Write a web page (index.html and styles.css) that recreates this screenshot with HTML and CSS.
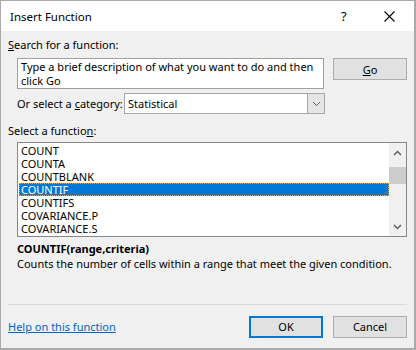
FILE: index.html
```html
<!DOCTYPE html>
<html>
<head>
<meta charset="utf-8">
<link rel="stylesheet" href="styles.css">
</head>
<body>
<div class="dialog">
  <div class="titlebar">
    <span class="title">Insert Function</span>
    <span class="help">?</span>
    <span class="close">
      <svg width="11" height="11" viewBox="0 0 11 11"><path d="M0.5 0.5 L10.5 10.5 M10.5 0.5 L0.5 10.5" stroke="#000" stroke-width="1.1" fill="none"/></svg>
    </span>
  </div>
  <div class="content">
    <div class="label"><u>S</u>earch for a function:</div>
    <div class="search-row">
      <div class="textbox">Type a brief description of what you want to do and then click Go</div>
      <div class="btn go"><u>G</u>o</div>
    </div>
    <div class="cat-row">
      <span class="cat-label">Or select a <u>c</u>ategory:</span>
      <div class="combo">
        <span class="combo-text">Statistical</span>
        <span class="combo-arrow">
          <svg width="9" height="6" viewBox="0 0 9 6"><path d="M1 1 L4.5 4.5 L8 1" stroke="#606060" stroke-width="1" fill="none"/></svg>
        </span>
      </div>
    </div>
    <div class="label sel-label">Select a functio<u>n</u>:</div>
    <div class="listbox">
      <div class="items">
        <div class="item">COUNT</div>
        <div class="item">COUNTA</div>
        <div class="item">COUNTBLANK</div>
        <div class="item selected">COUNTIF</div>
        <div class="item">COUNTIFS</div>
        <div class="item">COVARIANCE.P</div>
        <div class="item">COVARIANCE.S</div>
      </div>
      <div class="scrollbar">
        <svg class="arrow" width="9" height="6" viewBox="0 0 9 6"><path d="M1 5 L4.5 1.5 L8 5" stroke="#606060" stroke-width="1.5" fill="none"/></svg>
        <div class="track"><div class="thumb"></div></div>
        <svg class="arrow" width="9" height="6" viewBox="0 0 9 6"><path d="M1 1 L4.5 4.5 L8 1" stroke="#606060" stroke-width="1.5" fill="none"/></svg>
      </div>
    </div>
    <div class="syntax">COUNTIF(range,criteria)</div>
    <div class="desc">Counts the number of cells within a range that meet the given condition.</div>
  </div>
  <div class="footer">
    <a class="link" href="#">Help on this function</a>
    <div class="buttons">
      <div class="btn ok">OK</div>
      <div class="btn">Cancel</div>
    </div>
  </div>
</div>
</body>
</html>
```

FILE: styles.css
```css
* { box-sizing: border-box; }
html, body { margin: 0; padding: 0; }
body {
  font-family: "Noto Sans", "Open Sans", sans-serif;
  font-size: 11px;
  color: #000;
  background: #fff;
}
.dialog {
  width: 416px;
  height: 350px;
  background: #f0f0f0;
  border-style: solid;
  border-color: #aaaaaa;
  border-width: 1px 2px 2px 1px;
  display: flex;
  flex-direction: column;
}
.titlebar {
  height: 30px;
  background: #fff;
  display: flex;
  align-items: center;
  padding-left: 9px;
  flex-shrink: 0;
  font-size: 11.5px;
}
.title { flex: 1; }
.help { width: 12px; margin-right: 31px; font-size: 13px; }
.close { width: 11px; margin-right: 19px; display: flex; }
.content {
  padding: 6px 6px 0 7px;
  flex: 1;
}
.label { line-height: 15px; white-space: nowrap; }
u { text-decoration: underline; text-underline-offset: 1px; }
.search-row {
  display: flex;
  margin-top: 6px;
  padding-left: 9px;
  align-items: flex-start;
}
.textbox {
  width: 307px;
  height: 31px;
  background: #fff;
  border: 1px solid #a0a0a0;
  padding: 1px 3px;
  line-height: 14px;
}
.btn {
  width: 74px;
  height: 22px;
  background: #e1e1e1;
  border: 1px solid #adadad;
  display: flex;
  align-items: center;
  justify-content: center;
}
.go { margin-left: 9px; }
.cat-row {
  display: flex;
  align-items: center;
  margin-top: 4px;
  padding-left: 9px;
  height: 21px;
}
.cat-label { width: 107px; white-space: nowrap; }
.combo {
  width: 201px;
  height: 21px;
  background: #fff;
  border: 1px solid #a6a6a6;
  display: flex;
  align-items: center;
}
.combo-text { flex: 1; padding-left: 3px; }
.combo-arrow {
  width: 17px;
  height: 19px;
  background: #e5e5e5;
  border-left: 1px solid #a6a6a6;
  display: flex;
  align-items: center;
  justify-content: center;
}
.sel-label { margin-top: 9px; }
.listbox {
  margin-top: 4px;
  margin-left: 9px;
  width: 390px;
  height: 95px;
  background: #fff;
  border: 1px solid #828790;
  display: flex;
}
.items {
  flex: 1;
  padding: 1px 0 0 1px;
}
.item {
  height: 13px;
  line-height: 13px;
  padding-left: 2px;
}
.item.selected {
  background: #0078d7;
  color: #fff;
  outline: 1px dotted #f0a030;
  outline-offset: -1px;
}
.scrollbar {
  width: 17px;
  background: #f0f0f0;
  display: flex;
  flex-direction: column;
  align-items: center;
}
.arrow { margin: 7px 0 4px; flex-shrink: 0; }
.scrollbar .arrow:last-child { margin: 4px 0 6px; }
.track { flex: 1; width: 100%; }
.thumb { margin-top: 7px; height: 17px; background: #cdcdcd; width: 100%; }
.syntax {
  margin-top: 4px;
  margin-left: 9px;
  font-weight: bold;
  line-height: 15px;
}
.desc {
  margin-left: 9px;
  line-height: 15px;
}
.footer {
  margin: 0 7px 0 7px;
  border-top: 1px solid #d9d9d9;
  height: 44px;
  flex-shrink: 0;
  display: flex;
  align-items: center;
  padding-top: 6px;
  padding-bottom: 6px;
}
.link {
  flex: 1;
  color: #0066cc;
  text-decoration: underline;
}
.buttons { display: flex; gap: 10px; }
.ok { border: 2px solid #0078d7; }
```
